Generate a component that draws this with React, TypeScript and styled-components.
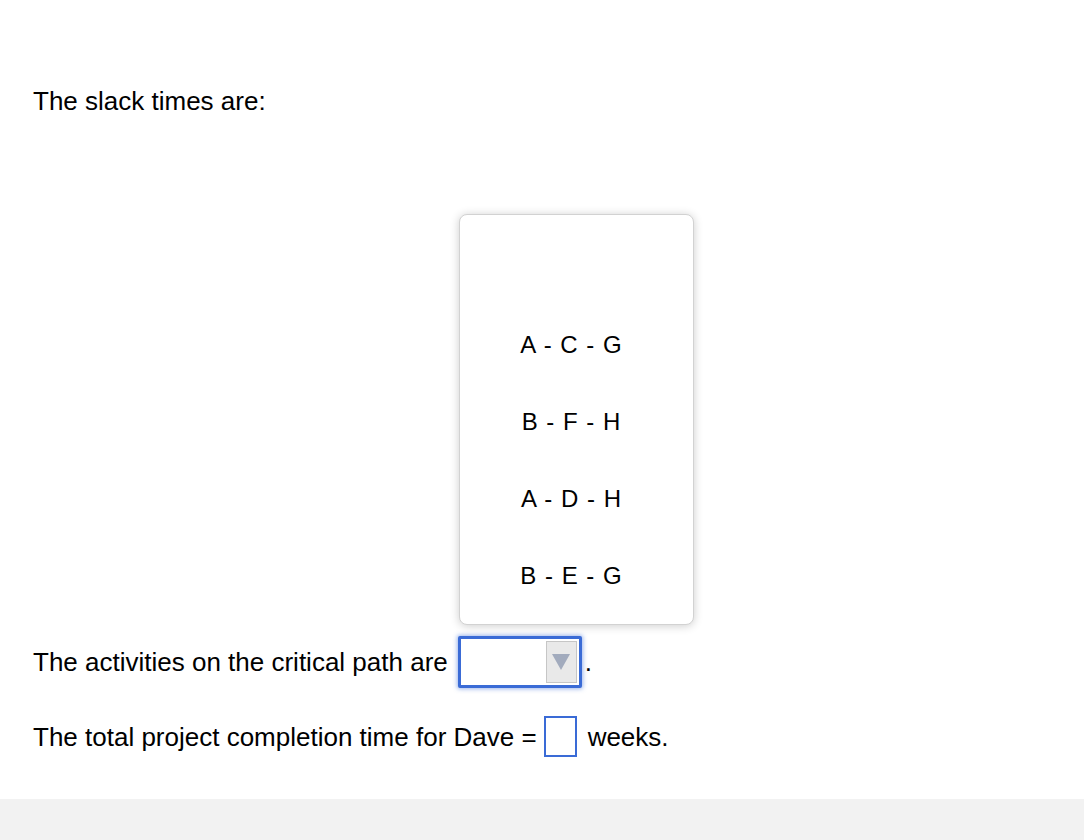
import React from "react";
import styled, { createGlobalStyle } from "styled-components";

const Global = createGlobalStyle`
  html, body {
    margin: 0;
    padding: 0;
    background: #ffffff;
  }
  body {
    font-family: "Liberation Sans", Arial, sans-serif;
    color: #000000;
  }
`;

const Page = styled.div`
  height: 840px;
  display: flex;
  flex-direction: column;
`;

const Content = styled.div`
  flex: 1;
  padding: 86px 0 0 33px;
  font-size: 26px;
  line-height: 30px;
`;

const Para = styled.p`
  margin: 0;
`;

const SelectRow = styled.div`
  margin-top: 520px;
  display: flex;
  align-items: center;
  position: relative;
`;

const SelectBox = styled.div`
  width: 116px;
  height: 46px;
  margin-left: 10px;
  border: 3px solid #3a6bd6;
  box-shadow: 0 0 4px 1px rgba(58, 107, 214, 0.5);
  border-radius: 2px;
  background: #ffffff;
  display: flex;
  justify-content: flex-end;
  align-items: center;
  padding-right: 2px;
`;

const ArrowButton = styled.div`
  width: 29px;
  height: 40px;
  border: 1px solid #c6c6c6;
  background: #e9e9e9;
  display: flex;
  align-items: center;
  justify-content: center;
`;

const Dot = styled.span`
  margin-left: 3px;
`;

const Menu = styled.div`
  position: absolute;
  left: 426px;
  top: -422px;
  width: 235px;
  height: 411px;
  background: #ffffff;
  border: 1px solid #d2d2d2;
  border-radius: 8px;
  box-shadow: 0 1px 10px rgba(0, 0, 0, 0.2);
  display: flex;
  flex-direction: column;
  align-items: center;
  padding-top: 116px;
  padding-right: 10px;
  box-sizing: border-box;
  gap: 49px;
`;

const Option = styled.div`
  font-size: 24px;
  line-height: 28px;
  letter-spacing: 1px;
`;

const TotalRow = styled.div`
  margin-top: 28px;
  display: flex;
  align-items: center;
`;

const NumBox = styled.div`
  width: 29px;
  height: 37px;
  border: 2px solid #3a6bd6;
  margin: 0 11px 0 7px;
`;

const Footer = styled.div`
  height: 41px;
  background: #f2f2f2;
`;

const options = ["A - C - G", "B - F - H", "A - D - H", "B - E - G"];

export default function App() {
  return (
    <Page>
      <Global />
      <Content>
        <Para>The slack times are:</Para>
        <SelectRow>
          <span>The activities on the critical path are</span>
          <SelectBox>
            <ArrowButton>
              <svg width="20" height="18" viewBox="0 0 20 18">
                <path d="M1 1 L19 1 L10 17 Z" fill="#a2abbd" />
              </svg>
            </ArrowButton>
          </SelectBox>
          <Dot>.</Dot>
          <Menu>
            {options.map((o) => (
              <Option key={o}>{o}</Option>
            ))}
          </Menu>
        </SelectRow>
        <TotalRow>
          <span>The total project completion time for Dave =</span>
          <NumBox />
          <span>weeks.</span>
        </TotalRow>
      </Content>
      <Footer />
    </Page>
  );
}
